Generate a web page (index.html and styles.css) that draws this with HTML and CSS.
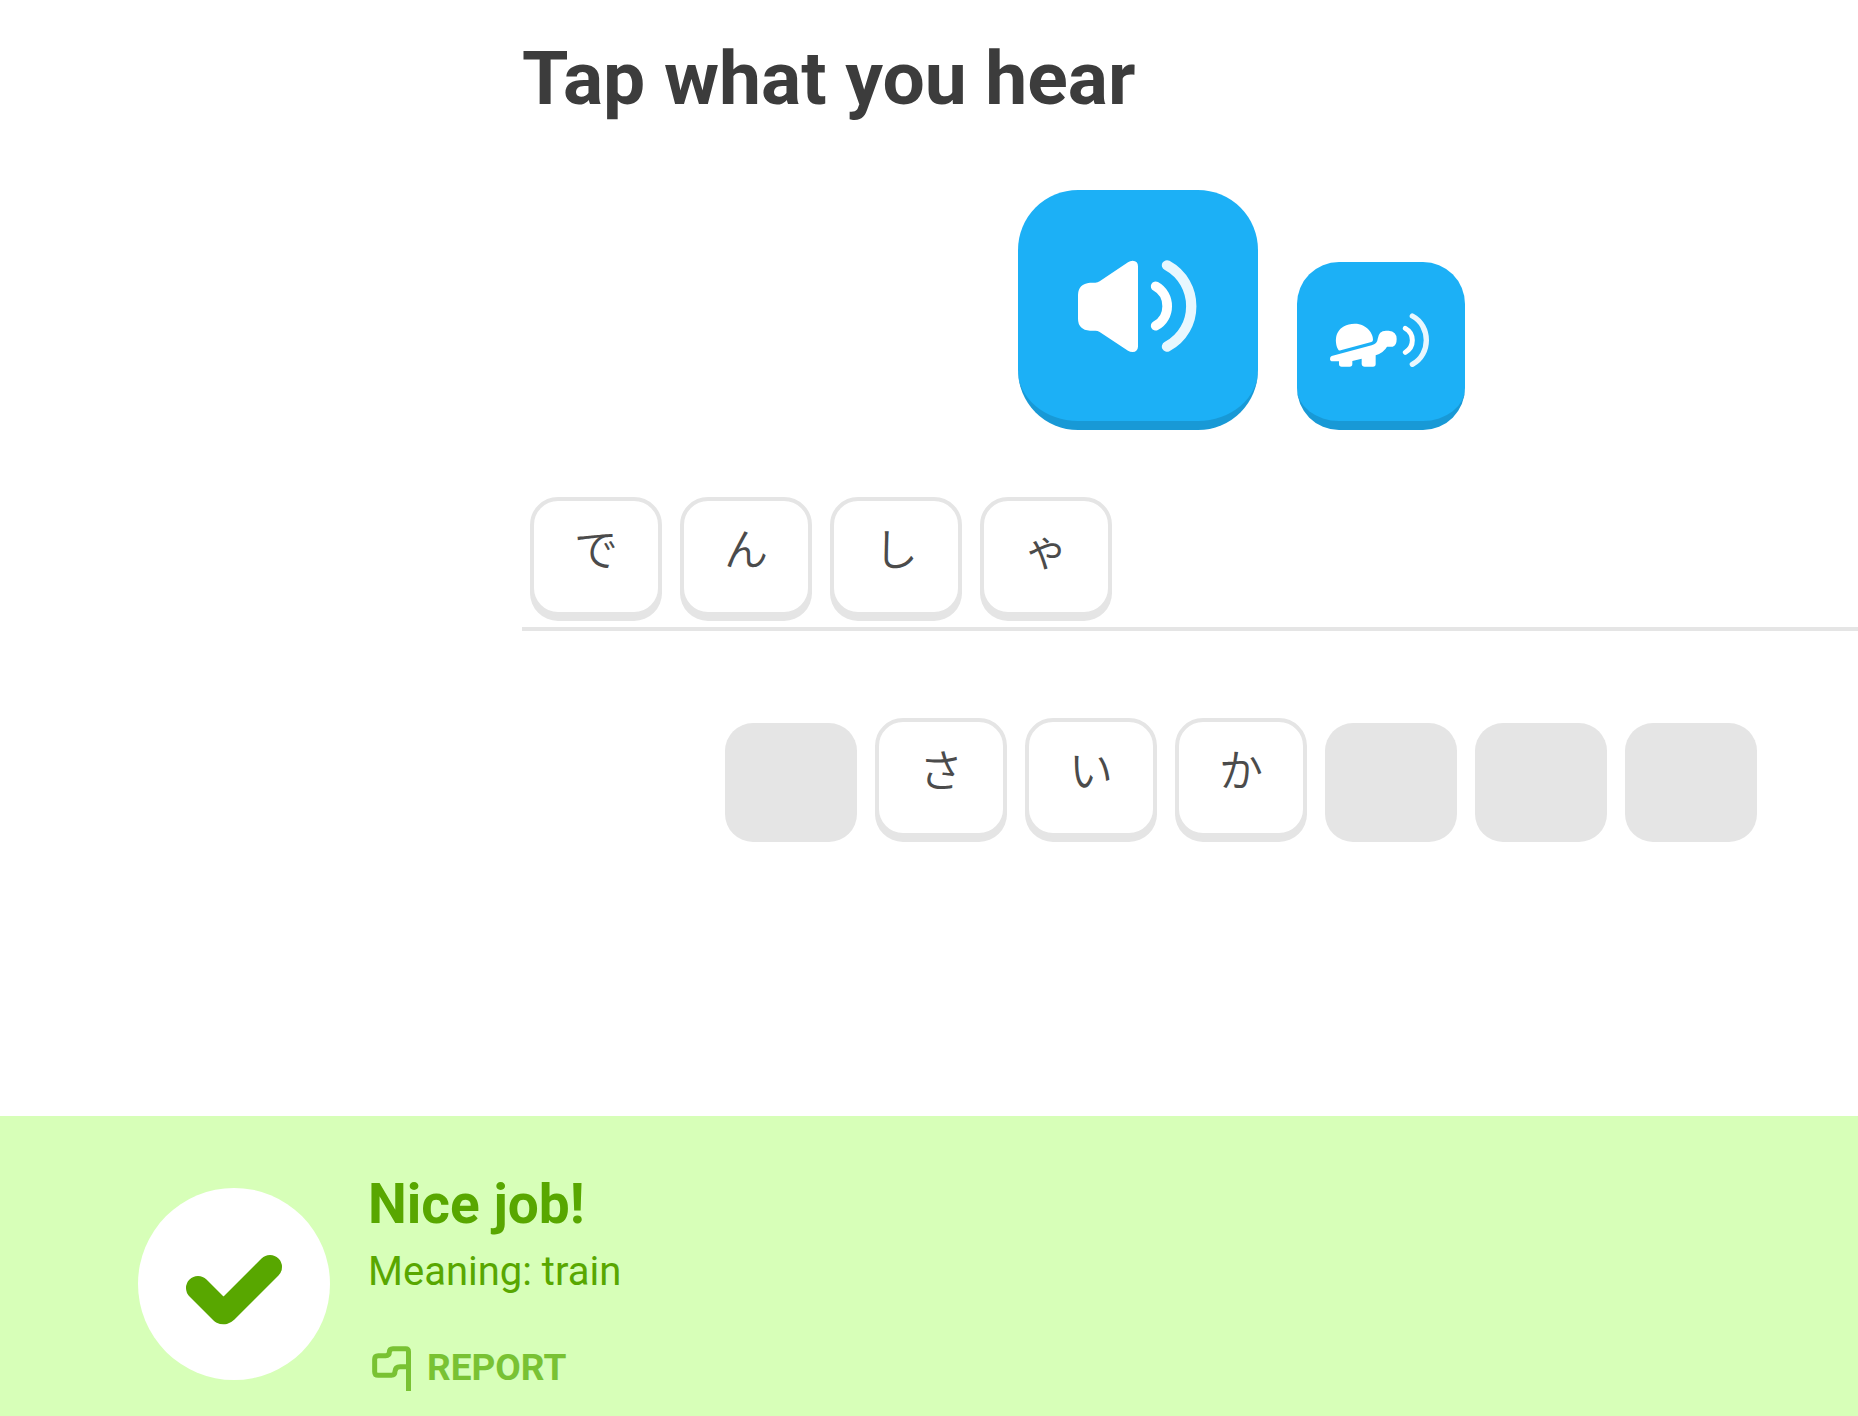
FILE: index.html
```html
<!DOCTYPE html>
<html lang="en">
<head>
<meta charset="utf-8">
<meta name="viewport" content="width=device-width, initial-scale=1">
<title>Listening exercise</title>
<link rel="stylesheet" href="styles.css">
</head>
<body>
<main class="exercise">
  <div class="exercise-inner">
    <h1 class="prompt">Tap what you hear</h1>

    <div class="audio">
      <button class="audio-button" type="button" aria-label="Play audio">
        <svg class="speaker-icon" viewBox="234 267 357 276" aria-hidden="true">
          <path fill="#fff" d="M270 335H286Q293 335 299 331L384 274Q390 269 398 269Q414 270 414 286V527Q413 542 398 543Q390 543 384 539L299 483Q293 479 286 479H270Q234 476 234 443V371Q235 338 270 335Z"/>
          <path class="wave" stroke-width="29" d="M467 346C513 371 513 440 467 464"/>
          <path class="wave wave-far" stroke-width="31" d="M501 283C598 336 598 475 501 527"/>
        </svg>
      </button>
      <button class="audio-button audio-button-slow" type="button" aria-label="Play audio slowly">
        <svg class="turtle-icon" viewBox="150 190 306 171" aria-hidden="true">
          <path fill="#fff" d="M174 299C158 263 173 223 224 222C262 222 280 254 279 270Q279 275 274 277L182 302Q176 304 174 299Z"/>
          <path fill="#fff" d="M155 319L275 287Q292 282 293 268Q296 243 318 243H326Q350 245 350 268Q350 288 338 291H321Q312 308 287 317V343Q287 351 279 351H254Q246 351 245 343V327L217 334V343Q217 351 209 351H185Q177 351 177 343V335H158Q150 335 150 328Q150 321 155 319Z"/>
          <path class="wave" stroke-width="15" d="M376 236C404 252 404 292 376 308"/>
          <path class="wave wave-far" stroke-width="16" d="M397 199C453 229 453 314 397 344"/>
        </svg>
      </button>
    </div>

    <div class="answer" lang="ja">
      <button class="tile" type="button">で</button>
      <button class="tile" type="button">ん</button>
      <button class="tile" type="button">し</button>
      <button class="tile" type="button">ゃ</button>
    </div>

    <div class="bank" lang="ja">
      <span class="slot"></span>
      <button class="tile" type="button">さ</button>
      <button class="tile" type="button">い</button>
      <button class="tile" type="button">か</button>
      <span class="slot"></span>
      <span class="slot"></span>
      <span class="slot"></span>
    </div>
  </div>
</main>

<footer class="result">
  <div class="result-badge">
    <svg class="check-icon" viewBox="0 0 192 192" aria-hidden="true">
      <path d="M60 100L84 124Q86 125 88 123L132 79"/>
    </svg>
  </div>
  <div class="result-text">
    <h2 class="result-title">Nice job!</h2>
    <p class="result-meaning">Meaning: train</p>
    <button class="report" type="button">
      <svg class="flag-icon" viewBox="66 558 117 135" aria-hidden="true">
        <path d="M175.500 693V575Q175.500 566 167 566H129Q118 566 118 577Q118 587 107 587H85Q74 587 74 598V635Q74 646 85 646H124Q135 646 135 634Q136 620 150 620H175"/>
      </svg>
      REPORT
    </button>
  </div>
</footer>
</body>
</html>
```
FILE: styles.css
```css
* {
  box-sizing: border-box;
}

body {
  margin: 0;
  min-height: 100vh;
  display: flex;
  flex-direction: column;
  background: #fff;
  color: #3c3c3c;
  font-family: Roboto, "Noto Sans CJK JP", sans-serif;
}

h1,
h2,
p {
  margin: 0;
}

button {
  margin: 0;
  padding: 0;
  border: 0;
  background: none;
  font: inherit;
  color: inherit;
  cursor: pointer;
}

.exercise {
  flex: 1;
  padding: 34px 0 48px 522px;
  overflow: hidden;
}

/* The question column runs past the right edge of the window. */
.exercise-inner {
  margin-right: -102px;
}

.prompt {
  font-size: 75px;
  line-height: 88px;
  font-weight: 700;
}

.audio {
  display: flex;
  justify-content: center;
  align-items: flex-end;
  gap: 39px;
  margin-top: 68px;
}

.audio-button {
  display: flex;
  align-items: center;
  justify-content: center;
  width: 240px;
  height: 240px;
  border-bottom: 9px solid #1899d6;
  border-radius: 60px;
  background: #1cb0f6;
}

.audio-button-slow {
  width: 168px;
  height: 168px;
  border-radius: 42px;
}

.speaker-icon {
  width: 119px;
  height: 92px;
}

.turtle-icon {
  width: 102px;
  height: 57px;
}

.wave {
  fill: none;
  stroke: #fff;
  stroke-linecap: round;
}

.wave-far {
  stroke: #e8f7fe;
}

.answer {
  display: flex;
  gap: 18px;
  margin-top: 67px;
  padding: 0 8px 6px;
  border-bottom: 4px solid #e5e5e5;
}

.bank {
  display: flex;
  justify-content: center;
  align-items: flex-end;
  gap: 18px;
  margin-top: 87px;
}

.tile {
  width: 132px;
  height: 119px;
  margin-bottom: 5px;
  padding-bottom: 20px;
  border: 4px solid #e5e5e5;
  border-radius: 28px;
  background: #fff;
  box-shadow: 0 5px 0 #e5e5e5;
  color: #4b4b4b;
  font-family: "Noto Sans CJK JP", sans-serif;
  font-size: 44px;
  font-weight: 350;
  line-height: 64px;
}

.slot {
  width: 132px;
  height: 119px;
  border-radius: 28px;
  background: #e5e5e5;
}

.result {
  display: flex;
  align-items: flex-start;
  gap: 38px;
  padding: 56px 138px 24px;
  background: #d7ffb8;
  color: #58a700;
}

.result-badge {
  flex: none;
  width: 192px;
  height: 192px;
  margin-top: 16px;
  border-radius: 50%;
  background: #fff;
}

.check-icon {
  display: block;
  width: 100%;
  height: 100%;
  fill: none;
  stroke: #58a700;
  stroke-width: 24;
  stroke-linecap: round;
  stroke-linejoin: round;
}

.result-title {
  font-size: 55px;
  line-height: 64px;
  font-weight: 700;
}

.result-meaning {
  margin-top: 12px;
  font-size: 40px;
  line-height: 48px;
}

.report {
  display: flex;
  align-items: center;
  gap: 16px;
  margin-top: 48px;
  padding-left: 4px;
  color: #79c233;
  font-size: 37px;
  line-height: 48px;
  font-weight: 700;
}

.flag-icon {
  width: 39px;
  height: 45px;
  fill: none;
  stroke: currentColor;
  stroke-width: 15;
}
```
